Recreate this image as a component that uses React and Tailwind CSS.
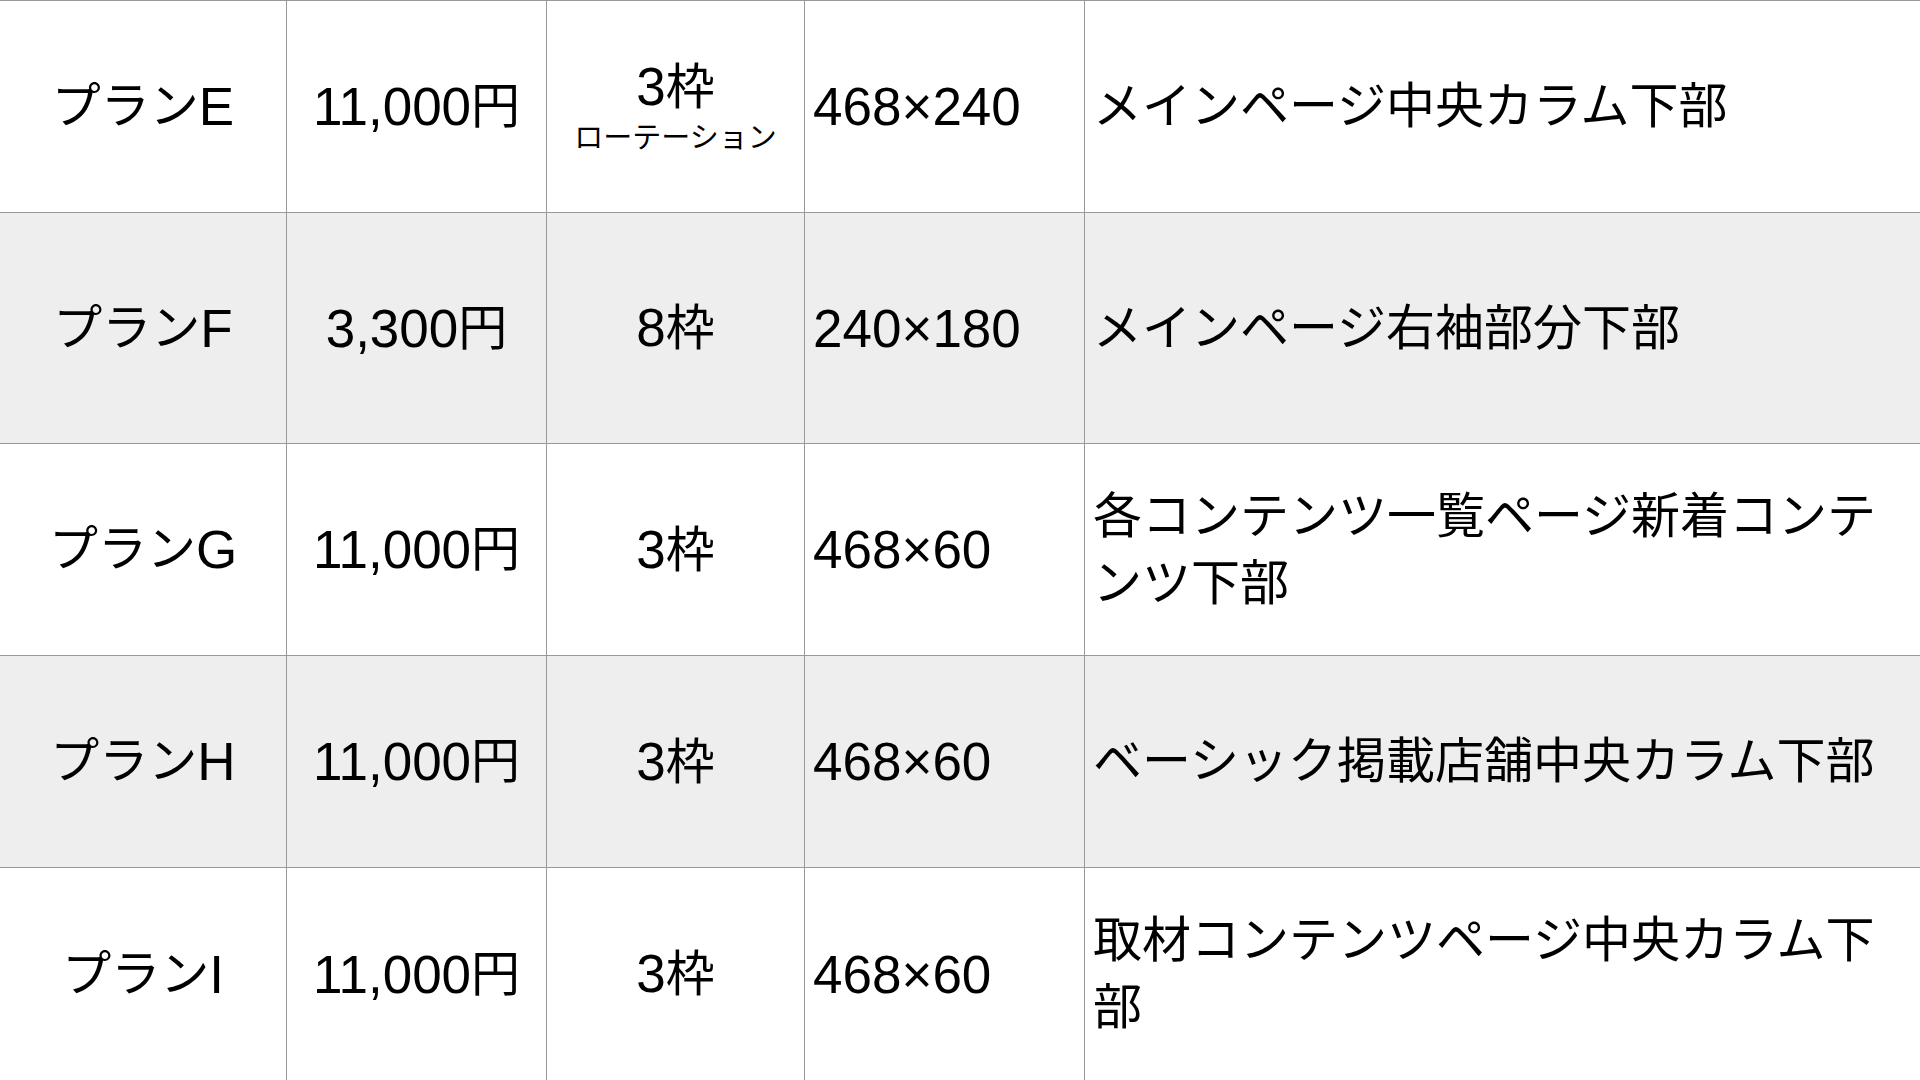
const rows = [
  { plan: 'E', price: '11,000', slots: '3', note: 'ローテーション', size: '468×240', place: 'メインページ中央カラム下部', h: 'h-[212px]', bg: 'bg-white' },
  { plan: 'F', price: '3,300', slots: '8', size: '240×180', place: 'メインページ右袖部分下部', h: 'h-[231px]', bg: 'bg-[#eeeeee]' },
  { plan: 'G', price: '11,000', slots: '3', size: '468×60', place: '各コンテンツ一覧ページ新着コンテンツ下部', h: 'h-[212px]', bg: 'bg-white' },
  { plan: 'H', price: '11,000', slots: '3', size: '468×60', place: 'ベーシック掲載店舗中央カラム下部', h: 'h-[212px]', bg: 'bg-[#eeeeee]' },
  { plan: 'I', price: '11,000', slots: '3', size: '468×60', place: '取材コンテンツページ中央カラム下部', h: 'h-[213px]', bg: 'bg-white' },
];

const font = { fontFamily: '"Liberation Sans", "Noto Sans CJK JP", sans-serif' };

export default function App() {
  return (
    <div className="w-[1920px] h-[1080px] overflow-hidden bg-white text-black" style={font}>
      {rows.map((r) => (
        <div key={r.plan} className={`flex border-t border-[#999999] ${r.h} ${r.bg}`}>
          {/* plan name */}
          <div className="w-[286px] flex items-center justify-center text-[49px] leading-none">
            <span>プラン</span>
            <span className="text-[53px]">{r.plan}</span>
          </div>

          {/* price */}
          <div className="w-[260px] border-l border-[#999999] flex items-center justify-center text-[49px] leading-none">
            <span className="text-[53px]">{r.price}</span>
            <span>円</span>
          </div>

          {/* slots */}
          <div className="w-[258px] border-l border-[#999999] flex flex-col items-center justify-center">
            <div className="flex items-center text-[49px] leading-[58px]">
              <span className="text-[53px]">{r.slots}</span>
              <span>枠</span>
            </div>
            {r.note && <div className="text-[29px] leading-[36px] mt-[4px]">{r.note}</div>}
          </div>

          {/* banner size */}
          <div className="w-[280px] border-l border-[#999999] flex items-center px-2 text-[53px] leading-none">
            {r.size}
          </div>

          {/* placement */}
          <div className="w-[836px] border-l border-[#999999] flex items-center px-2 text-[49px] leading-[67px]">
            <p>{r.place}</p>
          </div>
        </div>
      ))}
    </div>
  );
}
